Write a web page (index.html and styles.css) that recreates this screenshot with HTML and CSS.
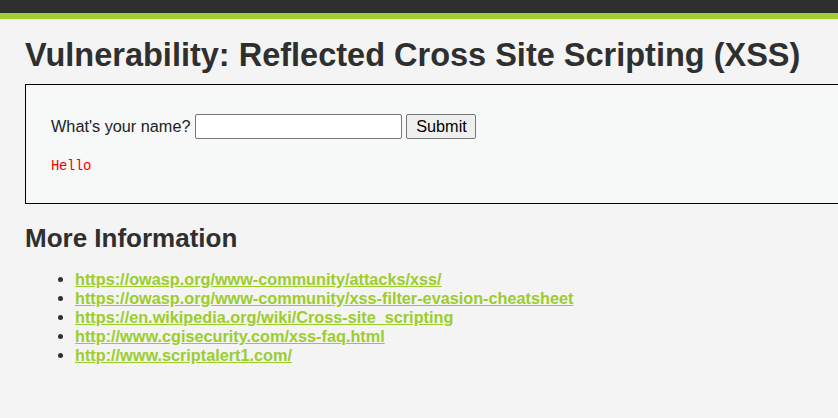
FILE: index.html
```html
<!DOCTYPE html>
<html>
<head>
<meta charset="utf-8">
<link rel="stylesheet" href="styles.css">
</head>
<body>
<div class="header"></div>
<div class="body_padded">
  <h1>Vulnerability: Reflected Cross Site Scripting (XSS)</h1>
  <div class="vulnerable_code_area">
    <form class="form-row">
      <span class="label">What's your name?</span>
      <input type="text" class="name-input">
      <button type="button" class="submit-btn">Submit</button>
    </form>
    <pre class="hello">Hello</pre>
  </div>
  <h2>More Information</h2>
  <ul class="links">
    <li><a href="#">https://owasp.org/www-community/attacks/xss/</a></li>
    <li><a href="#">https://owasp.org/www-community/xss-filter-evasion-cheatsheet</a></li>
    <li><a href="#">https://en.wikipedia.org/wiki/Cross-site_scripting</a></li>
    <li><a href="#">http://www.cgisecurity.com/xss-faq.html</a></li>
    <li><a href="#">http://www.scriptalert1.com/</a></li>
  </ul>
</div>
</body>
</html>
```
FILE: styles.css
```css
html, body {
  margin: 0;
  padding: 0;
  overflow: hidden;
}
body {
  background: #f4f4f4;
  color: #2f2f2f;
  font-family: "Liberation Sans", Arial, sans-serif;
  font-size: 16px;
  width: 838px;
  height: 418px;
}
.header {
  height: 13px;
  background: #2f2f2f;
  border-bottom: 6px solid #a3cd33;
}
.body_padded {
  padding: 0 0 0 25px;
  overflow: hidden;
}
h1 {
  margin: 0;
  padding-top: 16px;
  font-size: 32.5px;
  line-height: 40px;
  font-weight: bold;
  color: #2f2f2f;
}
.vulnerable_code_area {
  margin-top: 9px;
  width: 900px;
  height: 120px;
  box-sizing: border-box;
  border: 1px solid #000;
  background: #f7f8f8;
  padding: 28px 25px 0 25px;
}
.form-row {
  display: flex;
  align-items: center;
  margin: 0;
  height: 26px;
  color: #222;
}
.label {
  font-size: 16.25px;
  margin-right: 5px;
}
.name-input {
  width: 207px;
  height: 25px;
  box-sizing: border-box;
  border: 1px solid #767676;
  border-radius: 2px;
  background: #fff;
  margin: 0 4px 0 0;
  padding: 0;
}
.submit-btn {
  width: 70px;
  height: 25px;
  box-sizing: border-box;
  border: 1px solid #767676;
  border-radius: 2px;
  background: #efefef;
  font-family: "Liberation Sans", Arial, sans-serif;
  font-size: 16.25px;
  color: #000;
  padding: 0;
}
.hello {
  margin: 18px 0 0 0;
  color: #f00;
  font-family: "Liberation Mono", "DejaVu Sans Mono", monospace;
  font-size: 14px;
  letter-spacing: -0.4px;
  line-height: 18px;
}
h2 {
  margin: 0;
  padding-top: 18px;
  font-size: 26px;
  line-height: 32px;
  font-weight: bold;
  color: #2f2f2f;
}
.links {
  margin: 16px 0 0 0;
  padding-left: 50px;
  font-size: 16.25px;
  line-height: 19px;
}
.links a {
  color: #9bcd2c;
  font-weight: bold;
  text-decoration: underline;
}
```
